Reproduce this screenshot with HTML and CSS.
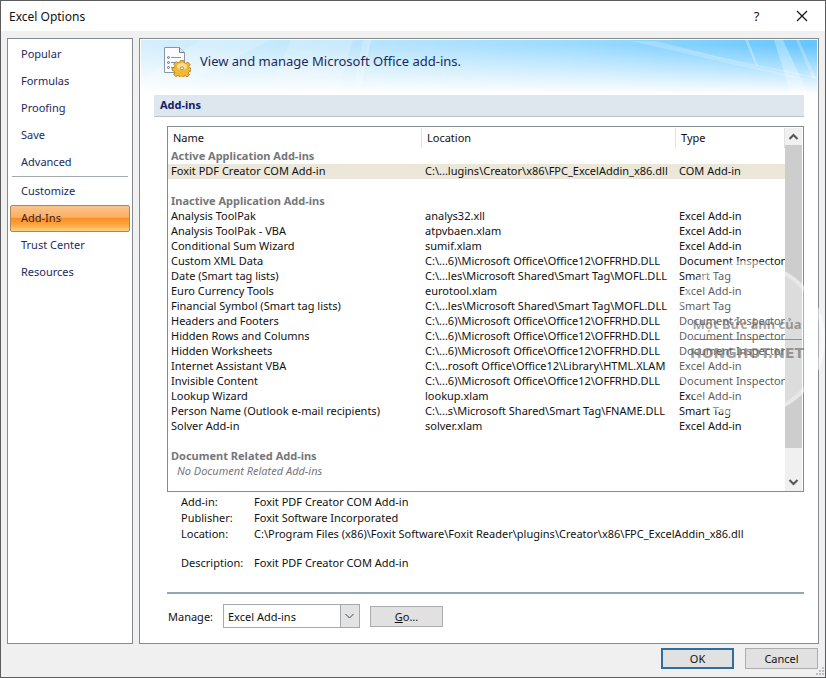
FILE: index.html
```
<!DOCTYPE html>
<html lang="en">
<head>
    <meta charset="UTF-8">
    <meta name="viewport" content="width=device-width, initial-scale=1.0">
    <title>Excel Options</title>
    <link rel="stylesheet" href="styles.css">
</head>
<body>
    <div class="dialog">
        <header class="titlebar">
            <h1>Excel Options</h1>
            <button class="title-btn" aria-label="Help">?</button>
            <button class="title-btn" aria-label="Close">
                <svg width="12" height="12" viewBox="0 0 12 12"><path d="M1 1l10 10M11 1L1 11" stroke="#111" stroke-width="1.2" fill="none"/></svg>
            </button>
        </header>

        <div class="content">
            <nav class="sidebar">
                <a href="#">Popular</a>
                <a href="#">Formulas</a>
                <a href="#">Proofing</a>
                <a href="#">Save</a>
                <a href="#">Advanced</a>
                <hr>
                <a href="#">Customize</a>
                <a href="#" class="active">Add-Ins</a>
                <a href="#">Trust Center</a>
                <a href="#">Resources</a>
            </nav>

            <main class="panel">
                <div class="banner">
                    <svg class="streaks" viewBox="0 0 676 55" preserveAspectRatio="none">
                        <g fill="#fff">
                            <path d="M490 1L660 40h10L515 1z" opacity=".2"/>
                            <path d="M500 1L676 37v2L505 2z" opacity=".25"/>
                            <path d="M633 0h9l26 55h-18z" opacity=".3"/>
                            <path d="M655 0h3l17 38h-4z" opacity=".25"/>
                            <path d="M604 0h3l10 26h-2z" opacity=".3"/>
                            <path d="M222 0h6l-12 55h-5z" opacity=".2"/>
                            <path d="M228 0h2l-12 55h-2z" opacity=".3"/>
                            <path d="M60 0h70L20 55H0V40z" opacity=".2"/>
                            <path d="M150 0h62l-16 55h-70z" opacity=".2"/>
                        </g>
                    </svg>
                    <svg class="banner-icon" width="28" height="31" viewBox="0 0 28 31">
                        <path d="M1.500 1.500h15l5 5v20h-20z" fill="#fbfcff" stroke="#8a97ab"/>
                        <path d="M16.500 1.500v5h5" fill="#dfe6f0" stroke="#6f7d94"/>
                        <g fill="#dfe4ee" stroke="#66738c">
                            <circle cx="5.500" cy="11.500" r="1"/>
                            <circle cx="5.500" cy="16.500" r="1"/>
                            <circle cx="5.500" cy="21.500" r="1"/>
                        </g>
                        <path d="M8 11.500h10M8 16.500h5M8 21.500h3" stroke="#8794ab"/>
                        <g transform="translate(19 22)">
                            <path d="M-1.700-7.500h3.400l.5 2.200 1.600.7 2-1.300 2.300 2.300-1.300 2 .6 1.400 1.600.4v2.800l-2 .6-.6 1.400 1 1.900-2.300 2-1.900-1.200-1.500.6-.4 1.500h-3.400l-.5-1.700-1.500-.6-2 1.100-2.300-2.100 1.200-1.900-.6-1.500-2-.5v-2.700l2.200-.6.6-1.500-1.200-1.900 2.400-2.200 1.900 1.200 1.500-.6z" fill="#f1b838" stroke="#a8751a" stroke-width=".8"/>
                            <ellipse cy="-1.500" rx="5" ry="3.500" fill="#fde9a8" opacity=".8"/>
                            <ellipse rx="1.800" ry="1.400" cy=".3" fill="#fff6d8" stroke="#a8751a" stroke-width=".8"/>
                        </g>
                    </svg>
                    <p>View and manage Microsoft Office add-ins.</p>
                </div>

                <section class="section">
                    <h2>Add-ins</h2>

                    <div class="section-body">
                        <div class="list">
                            <table>
                                <colgroup>
                                    <col class="col-name">
                                    <col class="col-location">
                                    <col>
                                </colgroup>
                                <thead>
                                    <tr><th>Name</th><th>Location</th><th>Type</th></tr>
                                </thead>
                                <tbody>
                                    <tr class="group"><td colspan="3">Active Application Add-ins</td></tr>
                                    <tr class="selected"><td>Foxit PDF Creator COM Add-in</td><td>C:\...lugins\Creator\x86\FPC_ExcelAddin_x86.dll</td><td>COM Add-in</td></tr>
                                    <tr><td colspan="3"></td></tr>
                                    <tr class="group"><td colspan="3">Inactive Application Add-ins</td></tr>
                                    <tr><td>Analysis ToolPak</td><td>analys32.xll</td><td>Excel Add-in</td></tr>
                                    <tr><td>Analysis ToolPak - VBA</td><td>atpvbaen.xlam</td><td>Excel Add-in</td></tr>
                                    <tr><td>Conditional Sum Wizard</td><td>sumif.xlam</td><td>Excel Add-in</td></tr>
                                    <tr><td>Custom XML Data</td><td>C:\...6)\Microsoft Office\Office12\OFFRHD.DLL</td><td>Document Inspector</td></tr>
                                    <tr><td>Date (Smart tag lists)</td><td>C:\...les\Microsoft Shared\Smart Tag\MOFL.DLL</td><td>Smart Tag</td></tr>
                                    <tr><td>Euro Currency Tools</td><td>eurotool.xlam</td><td>Excel Add-in</td></tr>
                                    <tr><td>Financial Symbol (Smart tag lists)</td><td>C:\...les\Microsoft Shared\Smart Tag\MOFL.DLL</td><td>Smart Tag</td></tr>
                                    <tr><td>Headers and Footers</td><td>C:\...6)\Microsoft Office\Office12\OFFRHD.DLL</td><td>Document Inspector</td></tr>
                                    <tr><td>Hidden Rows and Columns</td><td>C:\...6)\Microsoft Office\Office12\OFFRHD.DLL</td><td>Document Inspector</td></tr>
                                    <tr><td>Hidden Worksheets</td><td>C:\...6)\Microsoft Office\Office12\OFFRHD.DLL</td><td>Document Inspector</td></tr>
                                    <tr><td>Internet Assistant VBA</td><td>C:\...rosoft Office\Office12\Library\HTML.XLAM</td><td>Excel Add-in</td></tr>
                                    <tr><td>Invisible Content</td><td>C:\...6)\Microsoft Office\Office12\OFFRHD.DLL</td><td>Document Inspector</td></tr>
                                    <tr><td>Lookup Wizard</td><td>lookup.xlam</td><td>Excel Add-in</td></tr>
                                    <tr><td>Person Name (Outlook e-mail recipients)</td><td>C:\...s\Microsoft Shared\Smart Tag\FNAME.DLL</td><td>Smart Tag</td></tr>
                                    <tr><td>Solver Add-in</td><td>solver.xlam</td><td>Excel Add-in</td></tr>
                                    <tr><td colspan="3"></td></tr>
                                    <tr class="group"><td colspan="3">Document Related Add-ins</td></tr>
                                    <tr class="none"><td colspan="3">No Document Related Add-ins</td></tr>
                                </tbody>
                            </table>
                            <div class="scrollbar">
                                <svg width="17" height="17" viewBox="0 0 17 17"><path d="M4.500 11l4-4 4 4" fill="none" stroke="#555" stroke-width="2"/></svg>
                                <div class="track"><div class="thumb"></div></div>
                                <svg width="17" height="17" viewBox="0 0 17 17"><path d="M4.500 6l4 4 4-4" fill="none" stroke="#555" stroke-width="2"/></svg>
                            </div>
                            <div class="watermark">
                                <span class="mark-top">Một Bức ảnh của</span>
                                <span class="mark-site">HONGHOT.NET</span>
                            </div>
                        </div>

                        <dl class="details">
                            <dt>Add-in:</dt><dd>Foxit PDF Creator COM Add-in</dd>
                            <dt>Publisher:</dt><dd>Foxit Software Incorporated</dd>
                            <dt>Location:</dt><dd>C:\Program Files (x86)\Foxit Software\Foxit Reader\plugins\Creator\x86\FPC_ExcelAddin_x86.dll</dd>
                            <dt class="description">Description:</dt><dd class="description">Foxit PDF Creator COM Add-in</dd>
                        </dl>

                        <div class="manage">
                            <label for="manage">Manage:</label>
                            <span class="select">
                                <select id="manage">
                                    <option>Excel Add-ins</option>
                                    <option>COM Add-ins</option>
                                    <option>Smart Tags</option>
                                    <option>Disabled Items</option>
                                </select>
                                <svg width="20" height="24" viewBox="0 0 20 24"><path d="M.5.500h19v23H.5z" fill="#e3e3e3" stroke="#a3a9ad"/><path d="M5.500 10l4 4 4-4" fill="none" stroke="#444"/></svg>
                            </span>
                            <button class="btn"><u>G</u>o...</button>
                        </div>
                    </div>
                </section>
            </main>
        </div>

        <footer class="footer">
            <button class="btn btn-default">OK</button>
            <button class="btn">Cancel</button>
            <svg class="grip" width="10" height="10" viewBox="0 0 10 10"><path d="M7 0h2v2H7zM4 3h2v2H4zM7 3h2v2H7zM1 6h2v2H1zM4 6h2v2H4zM7 6h2v2H7z" fill="#bdbdbd"/></svg>
        </footer>
    </div>
</body>
</html>
```
FILE: styles.css
```
:root {
    --navy: #1c2a5e;
    --line: #848b8e;
    --face: #f0f0f0;
}

* {
    box-sizing: border-box;
    margin: 0;
    padding: 0;
}

body {
    font-family: "Noto Sans", "Open Sans", sans-serif;
    font-size: 11px;
    line-height: 15px;
    color: #111;
}

button,
select {
    font: inherit;
    color: inherit;
}

.dialog {
    display: flex;
    flex-direction: column;
    min-height: 100vh;
    background: var(--face);
    border: 1px solid #5c5c5e;
}

/* Title bar */
.titlebar {
    display: flex;
    align-items: center;
    height: 30px;
    padding: 0 1px 0 8px;
    background: #fff;
}

.titlebar h1 {
    flex: 1;
    font-size: 12px;
    font-weight: 400;
}

.title-btn {
    width: 45px;
    height: 30px;
    border: none;
    background: none;
    font-size: 13px;
}

.title-btn svg {
    display: block;
    margin: 0 auto;
}

/* Main area */
.content {
    flex: 1;
    display: flex;
    gap: 6px;
    padding: 7px 6px 0;
}

.sidebar {
    width: 126px;
    padding: 2px;
    background: #fff;
    border: 1px solid var(--line);
}

.sidebar a {
    display: block;
    height: 27px;
    padding: 0 10px;
    border: 1px solid transparent;
    border-radius: 2px;
    line-height: 23px;
    color: var(--navy);
    text-decoration: none;
}

.sidebar hr {
    margin: 0 2px 1px;
    border: none;
    border-top: 1px solid #a5abad;
}

.sidebar .active {
    border-color: #a88a5a;
    background: linear-gradient(#f9c58e, #fbaf62 45%, #fb8e26 50%, #fca63f 75%, #fed184);
    color: #3c2030;
}

.panel {
    flex: 1;
    display: flex;
    flex-direction: column;
    padding: 1px;
    background: #fff;
    border: 1px solid var(--line);
}

.banner {
    position: relative;
    display: flex;
    align-items: center;
    gap: 9px;
    height: 55px;
    padding: 0 22px 12px;
    background: linear-gradient(transparent 10%, #fff 98%), linear-gradient(90deg, #d5effc, #b5e3fd 38%, #9cdbff 65%, #66c5fd);
    color: var(--navy);
    font-size: 13px;
}

.streaks {
    position: absolute;
    inset: 0;
    width: 100%;
    height: 100%;
}

.banner-icon,
.banner p {
    position: relative;
}

.section {
    flex: 1;
    display: flex;
    flex-direction: column;
    padding: 0 13px;
}

.section h2 {
    height: 22px;
    padding: 0 6px;
    background: #dde7ed;
    border-bottom: 1px solid #bcc3c6;
    font-size: 11px;
    line-height: 20px;
    color: #0f1d66;
}

.section-body {
    flex: 1;
    display: flex;
    flex-direction: column;
    padding: 9px 0 14px 13px;
}

/* Add-in list */
.list {
    position: relative;
    flex: 1;
    display: flex;
    border: 1px solid var(--line);
}

.list table {
    flex: 1;
    align-self: flex-start;
    width: 100%;
    table-layout: fixed;
    border-collapse: collapse;
    line-height: 13px;
}

.col-name,
.col-location {
    width: 254px;
}

.list th {
    height: 22px;
    padding: 0 5px 2px;
    background: linear-gradient(#e2e2e2, #e2e2e2) right / 1px 20px no-repeat;
    font-weight: 400;
    text-align: left;
}

.list td {
    height: 15px;
    padding: 0 0 2px 3px;
    white-space: nowrap;
}

.list .group {
    font-weight: 700;
    color: #75777a;
}

.list .selected {
    background: #ebe8da;
}

.list .none td {
    padding-left: 9px;
    font-style: italic;
    color: #75777a;
}

.scrollbar {
    display: flex;
    flex-direction: column;
    width: 17px;
    margin: 1px 1px 0 0;
    background: var(--face);
}

.track {
    flex: 1;
}

.thumb {
    height: 92%;
    background: #cdcdcd;
}

/* Round stamp over the list */
.watermark {
    position: absolute;
    top: 134px;
    right: -22px;
    display: flex;
    flex-direction: column;
    align-items: center;
    justify-content: center;
    width: 156px;
    height: 156px;
    border: 4px solid rgba(255, 255, 255, 0.35);
    border-radius: 50%;
    background: rgba(255, 255, 255, 0.3);
    color: rgba(100, 100, 100, 0.6);
    font-weight: 700;
    white-space: nowrap;
}

.mark-top {
    padding-bottom: 7px;
    border-bottom: 1px solid rgba(90, 90, 90, 0.6);
    font-size: 13px;
}

.mark-site {
    padding-top: 6px;
    font-family: "DejaVu Sans", sans-serif;
    font-size: 14px;
}

.details {
    display: grid;
    grid-template-columns: 73px 1fr;
    padding: 2px 0 21px 14px;
    line-height: 16px;
}

.details .description {
    margin-top: 13px;
}

.manage {
    display: flex;
    align-items: center;
    padding: 10px 0 0 1px;
    border-top: 2px solid #8fa8b8;
}

.manage label {
    width: 55px;
}

.select {
    position: relative;
    width: 137px;
    height: 24px;
    margin-right: 10px;
}

.select select {
    width: 100%;
    height: 24px;
    padding: 0 24px 0 4px;
    border: 1px solid #a3a9ad;
    border-radius: 0;
    background: #fff;
    appearance: none;
}

.select svg {
    position: absolute;
    top: 0;
    right: 0;
    pointer-events: none;
}

.btn {
    width: 73px;
    height: 21px;
    border: 1px solid #adadad;
    background: #e1e1e1;
}

.btn-default {
    border: 2px solid #2f6f9f;
}

.footer {
    position: relative;
    display: flex;
    justify-content: flex-end;
    gap: 11px;
    padding: 4px 7px 8px;
}

.grip {
    position: absolute;
    right: 0;
    bottom: 0;
}
```
